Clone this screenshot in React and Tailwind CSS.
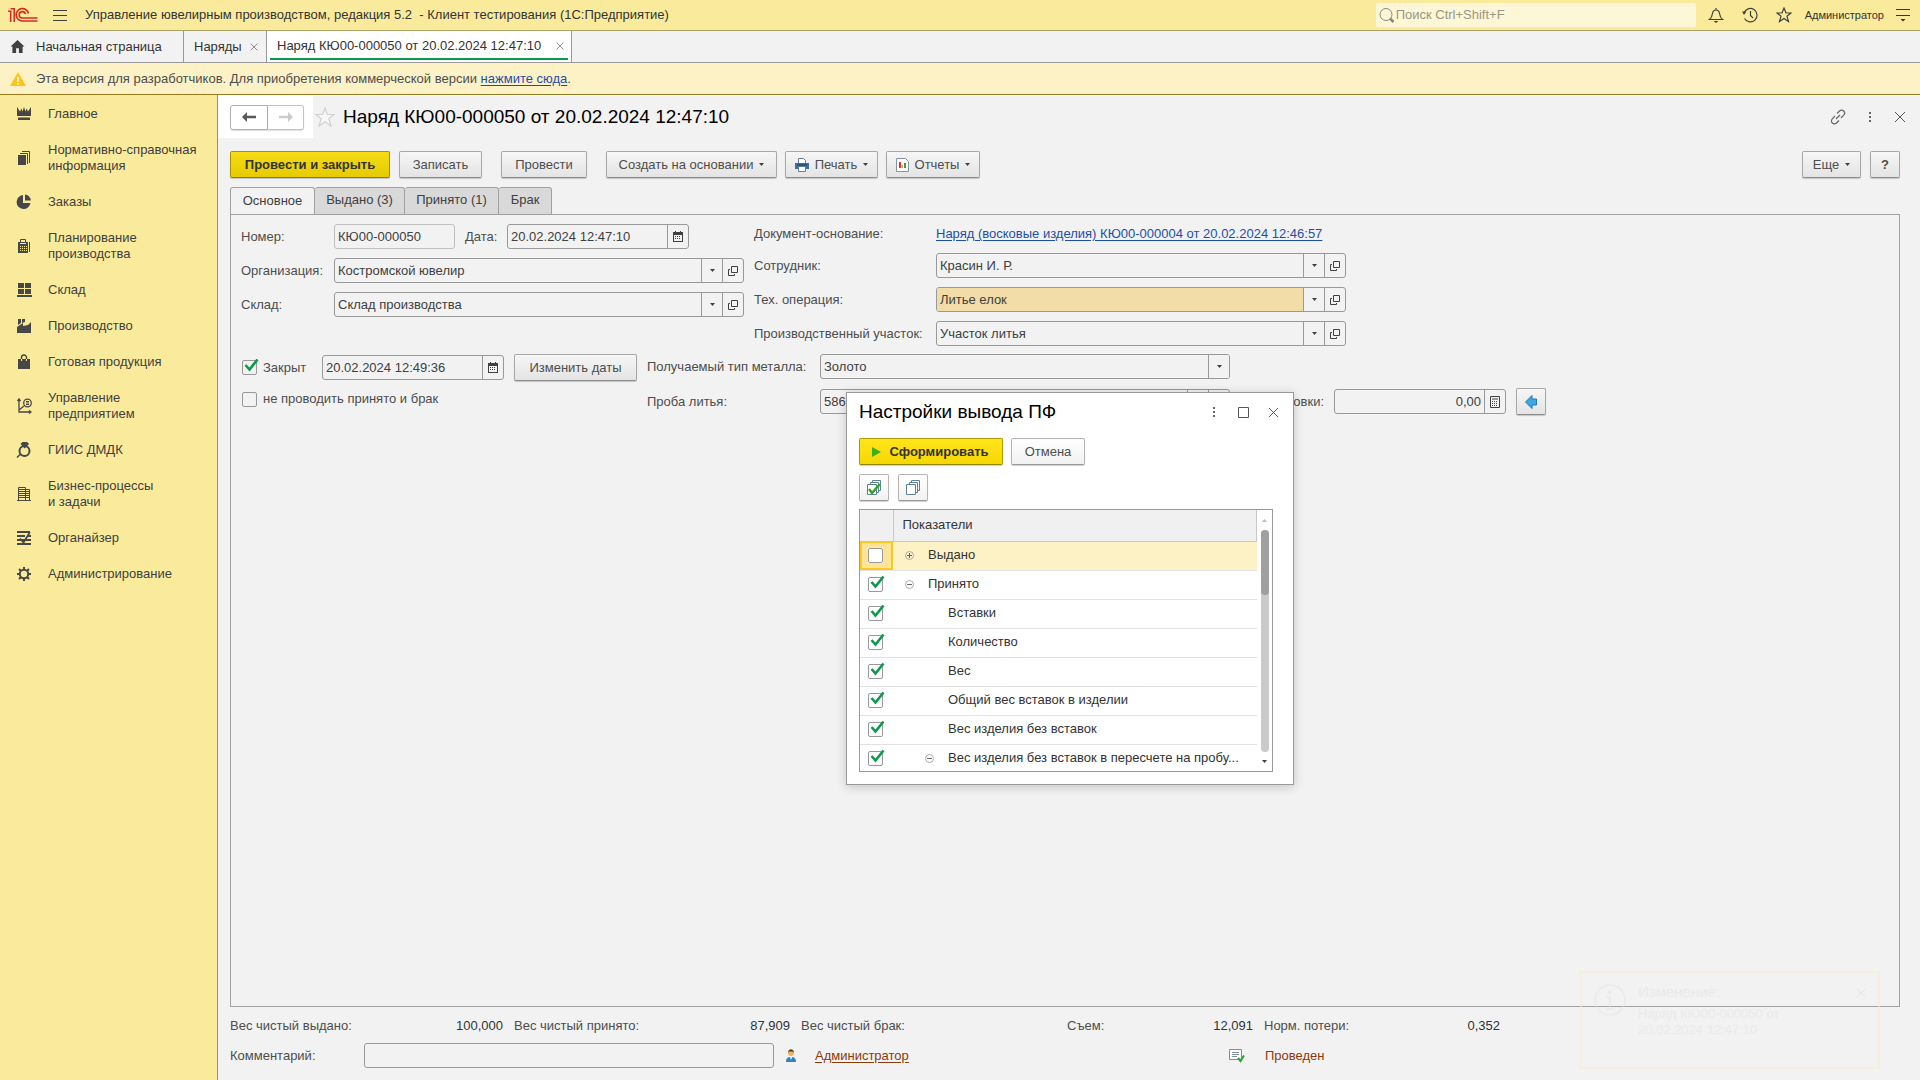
const navItems = [
    { icon: "crown", label: "Главное" },
    { icon: "docs", label: "Нормативно-справочная информация" },
    { icon: "pie", label: "Заказы" },
    { icon: "calc", label: "Планирование производства" },
    { icon: "boxes", label: "Склад" },
    { icon: "factory", label: "Производство" },
    { icon: "bag", label: "Готовая продукция" },
    { icon: "graph", label: "Управление предприятием" },
    { icon: "ring", label: "ГИИС ДМДК" },
    { icon: "building", label: "Бизнес-процессы и\u00a0задачи" },
    { icon: "organizer", label: "Органайзер" },
    { icon: "gear", label: "Администрирование" },
];

const formTabs = [
    { title: "Основное", width: "w-[85px]" },
    { title: "Выдано (3)", width: "w-[90px]" },
    { title: "Принято (1)", width: "w-[94px]" },
    { title: "Брак", width: "w-[53px]" },
];

const indicators = [
    { label: "Выдано", checked: false, toggle: "plus", level: 0 },
    { label: "Принято", checked: true, toggle: "minus", level: 0 },
    { label: "Вставки", checked: true, level: 1 },
    { label: "Количество", checked: true, level: 1 },
    { label: "Вес", checked: true, level: 1 },
    { label: "Общий вес вставок в изделии", checked: true, level: 1 },
    { label: "Вес изделия без вставок", checked: true, level: 1 },
    { label: "Вес изделия без вставок в пересчете на пробу...", checked: true, toggle: "minus", level: 1 },
];

const navShapes = {
    crown: <path d="M1 1l3 4.500L5.500 2.500 6.500 5.500 8 1l1.500 4.500 1-3L12 5.500 15 1v9H1zM2 11.500h12V14H2z" />,
    docs: (
        <>
            <path d="M2 5h8v10H2z" />
            <path d="M4 3.500h7.500V14M6 1.500h7.500V13" fill="none" stroke="currentColor" />
        </>
    ),
    pie: <path d="M7 1a7 7 0 1 0 7.500 8H7zM9 0.500V6.500h6A6.500 6.500 0 0 0 9 .5z" />,
    calc: (
        <>
            <path d="M4.500 4V1.500h5V4" fill="none" stroke="currentColor" />
            <path fillRule="evenodd" d="M2 4h10v11H2zM4 8v1h1V8zm2 0v1h1V8zm2 0v1h1V8zm2 0v1h1V8zM4 10v1h1v-1zm2 0v1h1v-1zm2 0v1h1v-1zm2 0v1h1v-1zM4 12v1h1v-1zm2 0v1h1v-1zm2 0v1h1v-1zm2 0v1h1v-1zM4 5v1h6V5z" />
            <path d="M13 4h1v10h-1z" />
        </>
    ),
    boxes: <path d="M2 1h6v5H2zM9 1h6v5H9zM2 7h6v5H2zM9 7h6v5H9zM1 13h15v2H1z" />,
    factory: <path d="M2 1h3v4l-3 2zM6 1h3v3L6 5zM1 15V9l6-4v3l5-1 3-3v11z" />,
    bag: (
        <>
            <path d="M2 5h12v10H2z" />
            <path d="M5.500 5V3.500a2.500 2.500 0 0 1 5 0V5" fill="none" stroke="currentColor" strokeWidth="1.400" />
            <path d="M5.500 5v2M10.500 5v2" stroke="#faeb9c" />
        </>
    ),
    graph: (
        <>
            <path d="M3 1v13h12M3 12l5-4M1.500 3L3 1l1.500 2M13 12.500l2 1.500-2 1.500" fill="none" stroke="currentColor" strokeWidth="1.300" />
            <circle cx="11.500" cy="5" r="3.800" fill="none" stroke="currentColor" strokeWidth="1.300" />
            <path d="M10 3h3v1.500h-3zM10 5.500h3V7h-3z" />
        </>
    ),
    ring: (
        <>
            <circle cx="8.500" cy="9" r="5" fill="none" stroke="currentColor" strokeWidth="2" />
            <path d="M5.500 2L7 .5h3.500L12 2 8.700 5.500zM1 15.500l4-4" stroke="currentColor" strokeWidth="1.500" />
        </>
    ),
    building: (
        <>
            <path d="M2.500 15V1.500h7V15M9.500 3.500h4V15M1 14.500h14" fill="none" stroke="currentColor" />
            <path d="M3 3.500h6M3 5.500h6M3 7.500h6M3 9.500h6M3 11.500h6M10 5.500h3M10 7.500h3M10 9.500h3M10 11.500h3" stroke="currentColor" />
        </>
    ),
    organizer: (
        <path d="M1 2h13M1 6h8M11 6h4M1 10h14M1 14h14M4 8.500l3.500 4L14 2" fill="none" stroke="currentColor" strokeWidth="1.800" />
    ),
    gear: (
        <>
            <circle cx="8" cy="8" r="4.200" fill="none" stroke="currentColor" strokeWidth="2" />
            <path d="M8 1v2.500M8 12.500V15M1 8h2.500M12.500 8H15M3 3l1.800 1.800M11.200 11.200L13 13M13 3l-1.800 1.800M3 13l1.800-1.800" stroke="currentColor" strokeWidth="2" />
        </>
    ),
};

const buttonColors = {
    gray: "border-[#a8a8a8] border-b-[#8c8c8c] bg-linear-to-b from-[#f6f6f6] to-[#e4e4e4] text-[#4d4d4d]",
    white: "border-[#b4b4b4] border-b-[#999] bg-linear-to-b from-white to-[#f2f2f2] text-[#4d4d4d]",
    gold: "font-bold border-[#a89200] border-b-[#8f7c00] bg-linear-to-b from-[#f5dc14] to-[#e6cb00] text-[#333]",
    yellow: "font-bold border-[#b09a00] border-b-[#948200] bg-linear-to-b from-[#ffe41a] to-[#f5d800] text-[#333]",
};

function NavIcon({ name }) {
    return (
        <svg viewBox="0 0 16 16" fill="currentColor" className="w-4 h-4 shrink-0 text-[#474747]">
            {navShapes[name]}
        </svg>
    );
}

function Logo() {
    return (
        <svg viewBox="0 0 30 16" className="w-[30px] h-4 shrink-0" fill="none" stroke="#dc2a1e" strokeWidth="1.600">
            <path d="M0 4.300h2.700V15M2.500 1.800h3.700V15" />
            <path d="M20.500 6.500A6.200 6.200 0 1 0 14.300 14H29.500" />
            <path d="M17.500 7A3.200 3.200 0 1 0 14.300 11H29.500" />
        </svg>
    );
}

function Caret({ className = "text-[#404040]" }) {
    return (
        <svg viewBox="0 0 5 3" fill="currentColor" className={`w-[5px] h-[3px] ${className}`}>
            <path d="M0 0h5L2.500 3z" />
        </svg>
    );
}

function CloseIcon({ className = "w-3 h-3" }) {
    return (
        <svg viewBox="0 0 12 12" className={className} fill="none" stroke="#555">
            <path d="M1 1l10 10M11 1L1 11" />
        </svg>
    );
}

function DotsIcon() {
    return (
        <svg viewBox="0 0 4 12" className="w-1 h-3" fill="#666">
            <path d="M1 1h2v2H1zM1 5h2v2H1zM1 9h2v2H1z" />
        </svg>
    );
}

function OpenIcon() {
    return (
        <svg viewBox="0 0 10 10" className="w-[10px] h-[10px]" fill="none" stroke="#404040">
            <path d="M3.500 .5h6v6h-6zM2 3.500H.5v6h6V8" />
        </svg>
    );
}

function CalendarIcon() {
    return (
        <svg viewBox="0 0 10 11" className="w-[10px] h-[11px]">
            <path d="M0 1h10v10H0z" fill="#404040" />
            <path d="M2 0h1v2H2zM7 0h1v2H7z" fill="#404040" />
            <path d="M1 4h8v6H1z" fill="#f2f2f2" />
            <path d="M2 5.500h6M2 7.500h6" stroke="#404040" strokeDasharray="1 1" />
        </svg>
    );
}

function CalculatorIcon() {
    return (
        <svg viewBox="0 0 10 12" className="w-[10px] h-3" fill="none" stroke="#404040">
            <path d="M.5 .5h9v11h-9zM2 3h6" />
            <path d="M2 5.500h6M2 7.500h6M2 9.500h6" strokeDasharray="1 1" />
        </svg>
    );
}

function SheetStack() {
    return (
        <>
            <path d="M6.500 .5h8v10h-8z" />
            <path d="M4.500 2.500h8v10h-8z" />
            <path d="M1.500 4.500h9v10h-9z" />
        </>
    );
}

function Button({ children, className = "", label, color = "gray" }) {
    return (
        <button
            type="button"
            aria-label={label}
            className={`flex items-center justify-center h-[27px] rounded-[2px] border shadow-[0_1px_1px_#00000030] whitespace-nowrap ${buttonColors[color]} ${className}`}
        >
            {children}
        </button>
    );
}

function Checkbox({ id, label, defaultChecked = false }) {
    return (
        <span className="relative block w-[15px] h-[15px] shrink-0">
            <input
                id={id}
                type="checkbox"
                aria-label={label}
                defaultChecked={defaultChecked}
                className="peer block appearance-none w-[15px] h-[15px] border border-[#999] rounded-[2px] bg-transparent"
            />
            <svg
                viewBox="0 0 18 14"
                className="hidden peer-checked:block absolute left-0 -top-[2px] w-[18px] h-[14px] pointer-events-none"
                fill="none"
                stroke="#0a9a4b"
                strokeWidth="2.600"
            >
                <path d="M3.500 7l4 4.500L15.500 1.500" />
            </svg>
        </span>
    );
}

function ComboField({ id, value, className, openable = true, highlight = false }) {
    return (
        <div className={`flex h-[25px] border border-[#999] rounded-[3px] overflow-hidden ${className}`}>
            <div className="relative flex-1">
                <select
                    id={id}
                    className={`appearance-none w-full h-full pl-[3px] pr-6 text-[#404040] ${highlight ? "bg-[#f2dca8]" : "bg-transparent"}`}
                >
                    <option>{value}</option>
                </select>
                <span className="absolute right-0 top-0 h-full w-[21px] border-l border-[#999] bg-[#f2f2f2] flex items-center justify-center pointer-events-none">
                    <Caret />
                </span>
            </div>
            {openable && (
                <button type="button" aria-label="Открыть" className="w-[21px] border-l border-[#999] flex items-center justify-center">
                    <OpenIcon />
                </button>
            )}
        </div>
    );
}

function InputField({ id, value, className, icon, buttonLabel, inputClass = "" }) {
    return (
        <div className={`flex h-[25px] border border-[#999] rounded-[3px] ${className}`}>
            <input id={id} type="text" defaultValue={value} className={`flex-1 min-w-0 px-[3px] text-[#404040] ${inputClass}`} />
            <button type="button" aria-label={buttonLabel} className="w-[21px] border-l border-[#999] flex items-center justify-center">
                {icon}
            </button>
        </div>
    );
}

function TopBar() {
    return (
        <header className="flex items-center h-[31px] bg-[#faeb9c] border-b border-[#aba266] text-[#333]">
            <a href="#" aria-label="1С:Предприятие" className="ml-2">
                <Logo />
            </a>
            <button type="button" aria-label="Меню" className="ml-[15px]">
                <svg viewBox="0 0 14 12" className="w-[14px] h-3" stroke="#404040" fill="none">
                    <path d="M0 1.500h14M0 6.500h14M0 11.500h14" />
                </svg>
            </button>
            <span className="ml-[18px] whitespace-pre">Управление ювелирным производством, редакция 5.2  - Клиент тестирования (1С:Предприятие)</span>
            <label className="ml-auto flex items-center gap-px w-80 h-6 pl-[3px] rounded-[2px] bg-[#fdf7d8]">
                <svg viewBox="0 0 16 16" className="w-4 h-4" fill="none" stroke="#8c8872">
                    <circle cx="7" cy="7.500" r="6" />
                    <path d="M11 11.500l3.500 3.500" strokeWidth="2.500" />
                </svg>
                <input
                    type="search"
                    aria-label="Поиск"
                    placeholder="Поиск Ctrl+Shift+F"
                    className="flex-1 min-w-0 text-[13px] placeholder:text-[#9a9682]"
                />
            </label>
            <div className="flex items-center ml-3 gap-[18px]">
                <button type="button" aria-label="Уведомления">
                    <svg viewBox="0 0 16 16" className="w-4 h-4" fill="none" stroke="#404040" strokeWidth="1.200">
                        <path d="M1.500 12.500c2-1.500 2.500-3 3-6 .3-2.500 1.500-3.500 3.500-3.500s3.200 1 3.500 3.500c.5 3 1 4.500 3 6zM8 1v2" />
                        <path d="M5.500 14h5L8 16z" fill="#404040" stroke="none" />
                    </svg>
                </button>
                <button type="button" aria-label="История">
                    <svg viewBox="0 0 16 16" className="w-4 h-4" fill="none" stroke="#404040" strokeWidth="1.200">
                        <path d="M2 6a6.700 6.700 0 1 1 .5 5.500M8.500 4v4.500l2.500 2.500" />
                        <path d="M0 4.500h4.500L2 8z" fill="#404040" stroke="none" />
                    </svg>
                </button>
                <button type="button" aria-label="Избранное">
                    <svg viewBox="0 0 16 16" className="w-4 h-4" fill="none" stroke="#404040" strokeWidth="1.200">
                        <path d="M8 1l2 5h5l-4 3.300 1.500 5.200L8 11.500l-4.500 3L5 9.300 1 6h5z" />
                    </svg>
                </button>
            </div>
            <a href="#" className="ml-[13px] text-[11px]">Администратор</a>
            <button type="button" aria-label="Настройки" className="ml-3 mr-[10px]">
                <svg viewBox="0 0 14 14" className="w-[14px] h-[14px]" fill="none" stroke="#333">
                    <path d="M0 1.500h14M0 7.500h14" />
                    <path d="M4.500 11h5L7 13.500z" fill="#333" stroke="none" />
                </svg>
            </button>
        </header>
    );
}

function WindowTabs() {
    return (
        <nav className="flex h-8 bg-[#f2f2f2] border-b border-[#999] text-[#333]">
            <a href="#" className="flex items-center gap-[11px] pl-[10px] w-[184px] border-r border-[#999]">
                <svg viewBox="0 0 15 14" className="w-[15px] h-[13px]" fill="#404040">
                    <path d="M7.500 0L15 7h-2v7H9V9H6v5H2V7H0z" />
                </svg>
                Начальная страница
            </a>
            <div className="flex items-center justify-between pl-[10px] pr-2 w-[83px] border-r border-[#999]">
                <a href="#">Наряды</a>
                <button type="button" aria-label="Закрыть Наряды">
                    <CloseIcon className="w-2 h-2" />
                </button>
            </div>
            <div className="w-[305px] px-[3px] bg-white border-r border-[#999]">
                <div className="flex items-center justify-between h-[29px] pt-[2px] pl-[7px] pr-1 border-b-2 border-[#0b994c]">
                    <a href="#">Наряд КЮ00-000050 от 20.02.2024 12:47:10</a>
                    <button type="button" aria-label="Закрыть Наряд">
                        <CloseIcon className="w-2 h-2" />
                    </button>
                </div>
            </div>
        </nav>
    );
}

function Banner() {
    return (
        <div className="flex items-center h-8 pl-[10px] bg-[#fdf2c6] border-b border-[#947a1c] text-[#4d4d4d]">
            <svg viewBox="0 0 16 14" className="w-4 h-[14px] mr-[10px]">
                <path d="M8 0l8 14H0z" fill="#fcc419" />
                <path d="M7.200 5h1.600v5H7.200zM7.200 11h1.600v1.500H7.200z" fill="#fff" />
            </svg>
            <p>
                Эта версия для разработчиков. Для приобретения коммерческой версии{" "}
                <a href="#" className="text-[#1d4fa8] underline underline-offset-2">нажмите сюда</a>.
            </p>
        </div>
    );
}

function Sidebar() {
    return (
        <aside className="w-[218px] shrink-0 pt-px bg-[#faeb9c] border-r border-[#999066]">
            <ul>
                {navItems.map(item => (
                    <li key={item.label}>
                        <a href="#" className="flex items-center gap-4 py-[10px] pl-4 pr-2 leading-4 text-[#404040]">
                            <NavIcon name={item.icon} />
                            <span className="w-[160px]">{item.label}</span>
                        </a>
                    </li>
                ))}
            </ul>
        </aside>
    );
}

function DocumentHeader() {
    return (
        <div className="flex items-center h-[42px] pr-[14px]">
            <div className="flex items-center h-full pl-3 pr-[9px] bg-white">
                <button
                    type="button"
                    aria-label="Назад"
                    className="flex items-center justify-center w-[38px] h-[25px] rounded-l-[3px] border border-[#b0b0b0] shadow-[0_1px_1px_#00000025]"
                >
                    <svg viewBox="0 0 14 10" className="w-[14px] h-[10px]" fill="#595959">
                        <path d="M0 5l5-5v3.800h9v2.400H5V10z" />
                    </svg>
                </button>
                <button
                    type="button"
                    aria-label="Вперед"
                    disabled
                    className="flex items-center justify-center w-[36px] h-[25px] rounded-r-[3px] border border-l-0 border-[#c4c4c4] shadow-[0_1px_1px_#00000020]"
                >
                    <svg viewBox="0 0 14 10" className="w-[14px] h-[10px]" fill="#ccc">
                        <path d="M14 5L9 0v3.800H0v2.400h9V10z" />
                    </svg>
                </button>
            </div>
            <button type="button" aria-label="В избранное" className="ml-[2px]">
                <svg viewBox="0 0 20 20" className="w-5 h-5" fill="#f8f8f8" stroke="#d0d0d0" strokeWidth="1.200">
                    <path d="M10 1l2.400 6.500H19l-5.200 4.200L16 19l-6-4.300L4 19l2.200-7.300L1 7.500h6.600z" />
                </svg>
            </button>
            <h1 className="ml-2 text-[19px] text-black">Наряд КЮ00-000050 от 20.02.2024 12:47:10</h1>
            <div className="flex items-center gap-[22px] ml-auto">
                <button type="button" aria-label="Получить ссылку">
                    <svg viewBox="0 0 16 16" className="w-4 h-4" fill="none" stroke="#666" strokeWidth="1.200">
                        <path d="M6 10l4-4M7 4.500l2.500-2.500a2.800 2.800 0 0 1 4.200 4.200L11 9M9 11.500L6.500 14a2.800 2.800 0 0 1-4.200-4.200L5 7" />
                    </svg>
                </button>
                <button type="button" aria-label="Еще действия">
                    <DotsIcon />
                </button>
                <button type="button" aria-label="Закрыть">
                    <CloseIcon />
                </button>
            </div>
        </div>
    );
}

function Toolbar() {
    return (
        <div className="flex items-center mt-[13px]">
            <Button className="w-[160px]" color="gold">Провести и закрыть</Button>
            <Button className="ml-[9px] w-[83px]">Записать</Button>
            <Button className="ml-[19px] w-[86px]">Провести</Button>
            <Button className="ml-[19px] w-[171px] gap-[6px]">
                Создать на основании <Caret />
            </Button>
            <Button className="ml-2 w-[93px] gap-[6px]">
                <svg viewBox="0 0 14 14" className="w-[14px] h-[14px]">
                    <path d="M3.500 5V.5h5l2 2V5" fill="#fff" stroke="#5c7f9e" />
                    <path d="M0 5h14v6H0z" fill="#3f6f9a" />
                    <path d="M2 7h10" stroke="#1e3f5e" />
                    <path d="M3.500 8.500h7v5h-7z" fill="#fff" stroke="#5c7f9e" />
                </svg>
                Печать <Caret />
            </Button>
            <Button className="ml-2 w-[94px] gap-[6px]">
                <svg viewBox="0 0 13 14" className="w-[13px] h-[14px]">
                    <path d="M.5 .5h9l3 3v10H.5z" fill="#fff" stroke="#8494a4" />
                    <path d="M3 4h2v6H3z" fill="#e2332b" />
                    <path d="M5.500 7h1.500v3H5.500z" fill="#f08c2e" />
                    <path d="M8 5h2v5H8z" fill="#3aa03a" />
                </svg>
                Отчеты <Caret />
            </Button>
            <Button className="ml-auto w-[59px] gap-[6px]">
                Еще <Caret />
            </Button>
            <Button className="ml-[9px] w-[30px] font-bold" label="Справка">?</Button>
        </div>
    );
}

function FormTabs() {
    return (
        <div role="tablist" className="flex -mb-px">
            {formTabs.map((tab, i) => (
                <button
                    key={tab.title}
                    type="button"
                    role="tab"
                    aria-selected={i === 0}
                    className={`h-7 pb-[2px] border border-[#a0a0a0] rounded-t-[3px] text-[#404040] ${tab.width} ${i === 0 ? "border-b-0 bg-[#f2f2f2]" : "border-l-0 bg-[#d9d9d9]"}`}
                >
                    {tab.title}
                </button>
            ))}
        </div>
    );
}

function MainForm() {
    return (
        <div className="pl-[10px] pt-[9px]">
            <div className="flex">
                <div className="grid grid-cols-[93px_410px] gap-y-[9px] items-center content-start">
                    <label htmlFor="number">Номер:</label>
                    <div className="flex items-center">
                        <input
                            id="number"
                            type="text"
                            readOnly
                            defaultValue="КЮ00-000050"
                            className="w-[121px] h-[25px] px-[3px] border border-[#c0c0c0] rounded-[3px] text-[#404040]"
                        />
                        <label htmlFor="date" className="w-[52px] pl-[10px]">Дата:</label>
                        <InputField id="date" value="20.02.2024 12:47:10" className="w-[182px]" icon={<CalendarIcon />} buttonLabel="Выбрать дату" />
                    </div>
                    <label htmlFor="company">Организация:</label>
                    <ComboField id="company" value="Костромской ювелир" className="w-full" />
                    <label htmlFor="store">Склад:</label>
                    <ComboField id="store" value="Склад производства" className="w-full" />
                </div>
                <div className="grid grid-cols-[182px_410px] gap-y-[9px] items-center ml-[10px]">
                    <span className="h-5 leading-5">Документ-основание:</span>
                    <a href="#" className="h-5 leading-5 text-[#1d4fa8] underline underline-offset-2 whitespace-nowrap">
                        Наряд (восковые изделия) КЮ00-000004 от 20.02.2024 12:46:57
                    </a>
                    <label htmlFor="employee">Сотрудник:</label>
                    <ComboField id="employee" value="Красин И. Р." className="w-full" />
                    <label htmlFor="operation">Тех. операция:</label>
                    <ComboField id="operation" value="Литье елок" className="w-full" highlight />
                    <label htmlFor="area" className="whitespace-nowrap">Производственный участок:</label>
                    <ComboField id="area" value="Участок литья" className="w-full" />
                </div>
            </div>
            <div className="flex mt-2">
                <div className="w-[406px] pl-px">
                    <div className="flex items-center">
                        <Checkbox id="closed" defaultChecked />
                        <label htmlFor="closed" className="w-[65px] pl-[6px]">Закрыт</label>
                        <InputField id="closedDate" value="20.02.2024 12:49:36" className="w-[182px]" icon={<CalendarIcon />} buttonLabel="Выбрать дату" />
                        <Button className="ml-[10px] w-[123px]">Изменить даты</Button>
                    </div>
                    <div className="flex items-center mt-[10px]">
                        <Checkbox id="skip" />
                        <label htmlFor="skip" className="pl-[6px]">не проводить принято и брак</label>
                    </div>
                </div>
                <div className="flex flex-col gap-[9px]">
                    <div className="flex items-center">
                        <label htmlFor="metal" className="w-[173px] whitespace-nowrap">Получаемый тип металла:</label>
                        <ComboField id="metal" value="Золото" className="w-[410px]" openable={false} />
                    </div>
                    <div className="flex items-center">
                        <label htmlFor="probe" className="w-[173px]">Проба литья:</label>
                        <ComboField id="probe" value="586" className="w-[410px]" />
                        <label htmlFor="alloy" className="w-[104px] pr-[10px] text-right whitespace-nowrap">Вес заготовки:</label>
                        <InputField
                            id="alloy"
                            value="0,00"
                            className="w-[172px]"
                            inputClass="text-right"
                            icon={<CalculatorIcon />}
                            buttonLabel="Калькулятор"
                        />
                        <Button className="ml-[10px] w-[30px]" label="Заполнить">
                            <svg viewBox="0 0 12 14" className="w-3 h-[14px]">
                                <path d="M.5 7L7 .5V4h4.500v6H7v3.500z" fill="#3ea6e0" stroke="#1f78b4" />
                            </svg>
                        </Button>
                    </div>
                </div>
            </div>
        </div>
    );
}

function Footer() {
    return (
        <footer className="pt-[11px] pb-3">
            <dl className="flex leading-4 h-4 whitespace-nowrap">
                <dt className="w-[134px]">Вес чистый выдано:</dt>
                <dd className="w-[139px] text-right text-[#333]">100,000</dd>
                <dt className="ml-[11px] w-[134px]">Вес чистый принято:</dt>
                <dd className="w-[142px] text-right text-[#333]">87,909</dd>
                <dt className="ml-[11px] w-[266px]">Вес чистый брак:</dt>
                <dt className="w-[60px]">Съем:</dt>
                <dd className="w-[126px] text-right text-[#333]">12,091</dd>
                <dt className="ml-[11px] w-[100px]">Норм. потери:</dt>
                <dd className="w-[136px] text-right text-[#333]">0,352</dd>
            </dl>
            <div className="flex items-center mt-[9px]">
                <label htmlFor="comment" className="w-[134px]">Комментарий:</label>
                <input id="comment" type="text" className="w-[410px] h-[25px] px-[3px] border border-[#999] rounded-[3px]" />
                <svg viewBox="0 0 10 13" className="w-[10px] h-[13px] ml-3">
                    <path d="M0 13c0-4 2-5 5-5s5 1 5 5z" fill="#2d86c0" />
                    <circle cx="5" cy="4" r="3" fill="#f0b36a" />
                    <path d="M2 4c0-5 6-5 6 0L7 2.500H3z" fill="#5a3a18" />
                    <path d="M4 8h2l-1 3z" fill="#fff" />
                </svg>
                <a href="#" className="ml-[19px] w-[414px] text-[#8c3a0a] underline underline-offset-2">Администратор</a>
                <svg viewBox="0 0 16 14" className="w-4 h-[14px] mr-5">
                    <path d="M.5 .5h12v10H.5z" fill="#fff" stroke="#7d8ea3" />
                    <path d="M3 3.500h7M3 5.500h7M3 7.500h5" stroke="#7d8ea3" />
                    <path d="M9 9l2.500 3L15 6.500" fill="none" stroke="#2ca32c" strokeWidth="2" />
                </svg>
                <span className="text-[#8c3a0a]">Проведен</span>
            </div>
        </footer>
    );
}

function TreeToggle({ type }) {
    return (
        <button type="button" aria-label={type === "plus" ? "Развернуть" : "Свернуть"} className="block w-[9px] h-[9px]">
            <svg viewBox="0 0 9 9" className="w-[9px] h-[9px]" fill="none" stroke="#aaa">
                <circle cx="4.500" cy="4.500" r="4" />
                <path d={type === "plus" ? "M2 4.500h5M4.500 2v5" : "M2 4.500h5"} stroke="#666" />
            </svg>
        </button>
    );
}

function IndicatorsTable() {
    return (
        <div className="flex mt-2 mr-5 h-[263px] border border-[#999] overflow-hidden">
            <table className="flex-1 table-fixed border-collapse w-[398px] text-[#333]">
                <thead>
                    <tr className="h-[31px] bg-[#f0f0f0] border-b border-[#c8c8c8]">
                        <th className="w-[33px] border-r border-[#c8c8c8]" aria-label="Отметка"></th>
                        <th className="p-0 pl-[9px] pb-px text-left font-normal border-r border-[#c8c8c8]">Показатели</th>
                    </tr>
                </thead>
                <tbody>
                    {indicators.map((row, i) => (
                        <tr key={row.label} className={`h-[29px] border-b border-[#e2e2e2] ${i === 0 ? "bg-[#fdf2c6]" : ""}`}>
                            <td className={i === 0 ? "p-0 bg-[#fde496] outline-2 -outline-offset-2 outline-[#fac81e]" : "p-0"}>
                                <span className={i === 0 ? "block ml-2 w-[15px] bg-white" : "block ml-2 w-[15px]"}>
                                    <Checkbox label={row.label} defaultChecked={row.checked} />
                                </span>
                            </td>
                            <td className="p-0 pb-px">
                                <div className={row.level === 0 ? "flex items-center pl-3" : "flex items-center pl-8"}>
                                    <span className="w-[9px] shrink-0">{row.toggle && <TreeToggle type={row.toggle} />}</span>
                                    <span className="ml-[14px] whitespace-nowrap">{row.label}</span>
                                </div>
                            </td>
                        </tr>
                    ))}
                </tbody>
            </table>
            <div className="flex flex-col items-center w-[15px] pt-[9px] pb-[8px] bg-white">
                <Caret className="rotate-180 text-[#bbb]" />
                <div className="flex-1 w-2 my-2 rounded-full bg-[#cacaca]">
                    <div className="w-2 h-[65px] rounded-full bg-[#a0a0a0]"></div>
                </div>
                <Caret />
            </div>
        </div>
    );
}

function SettingsDialog() {
    return (
        <section
            role="dialog"
            aria-labelledby="dialogTitle"
            className="absolute left-[846px] top-[392px] w-[448px] h-[393px] pl-3 bg-white border border-[#999] shadow-[0_2px_10px_#00000030]"
        >
            <div className="flex items-center h-[38px] pr-[14px]">
                <h2 id="dialogTitle" className="text-[19px] text-black">Настройки вывода ПФ</h2>
                <button type="button" aria-label="Еще действия" className="ml-auto">
                    <DotsIcon />
                </button>
                <button type="button" aria-label="Развернуть окно" className="ml-[22px]">
                    <svg viewBox="0 0 11 11" className="w-[11px] h-[11px]" fill="none" stroke="#555">
                        <path d="M.5 .5h10v10H.5z" />
                    </svg>
                </button>
                <button type="button" aria-label="Закрыть окно" className="ml-[19px]">
                    <CloseIcon className="w-[11px] h-[11px]" />
                </button>
            </div>
            <div className="flex gap-2 mt-[7px]">
                <Button className="w-[144px] gap-2 pr-px" color="yellow">
                    <svg viewBox="0 0 9 10" className="w-[9px] h-[10px]" fill="#3cb01e">
                        <path d="M0 0l9 5-9 5z" />
                    </svg>
                    Сформировать
                </Button>
                <Button className="w-[74px]" color="white">Отмена</Button>
            </div>
            <div className="flex gap-[9px] mt-[9px]">
                <Button className="w-[30px]" color="white" label="Отметить все">
                    <svg viewBox="0 0 16 16" className="w-4 h-4" fill="#fff" stroke="#5f7f98">
                        <SheetStack />
                        <path d="M3 9l3 4 8-9" fill="none" stroke="#2fa82a" strokeWidth="2.500" />
                    </svg>
                </Button>
                <Button className="w-[30px]" color="white" label="Снять отметки">
                    <svg viewBox="0 0 16 16" className="w-4 h-4" fill="#fff" stroke="#5f7f98">
                        <SheetStack />
                    </svg>
                </Button>
            </div>
            <IndicatorsTable />
        </section>
    );
}

function Toast() {
    return (
        <div role="status" className="absolute right-10 bottom-[11px] flex w-[300px] h-[98px] pt-[11px] px-3 border-2 border-[#f8eecb] opacity-50 text-[#e2e4e8]">
            <svg viewBox="0 0 32 32" className="w-8 h-8 shrink-0" fill="none" stroke="#e2e4e8" strokeWidth="1.500">
                <circle cx="16" cy="16" r="15" />
                <path d="M12 13h4v12M11 25h10M15 7h2v2h-2z" />
            </svg>
            <div className="ml-3 leading-4">
                <p className="text-[15px] mb-[6px]">Изменение:</p>
                <p className="w-[160px]">Наряд КЮ00-000050 от 20.02.2024 12:47:10</p>
            </div>
            <span className="ml-auto pt-1">
                <CloseIcon className="w-[10px] h-[10px] opacity-20" />
            </span>
        </div>
    );
}

export default function App() {
    return (
        <div className="relative flex flex-col min-h-screen bg-[#f2f2f2] font-['Liberation_Sans',Arial,sans-serif] text-[13px] leading-4 text-[#4d4d4d]">
            <TopBar />
            <WindowTabs />
            <Banner />
            <div className="flex flex-1">
                <Sidebar />
                <main className="flex flex-col flex-1 min-w-0 border-t border-white">
                    <DocumentHeader />
                    <div className="flex flex-col flex-1 pl-3 pr-5">
                        <Toolbar />
                        <div className="flex flex-col flex-1 mt-[9px]">
                            <FormTabs />
                            <div className="flex-1 border border-[#a0a0a0]">
                                <MainForm />
                            </div>
                        </div>
                        <Footer />
                    </div>
                </main>
            </div>
            <SettingsDialog />
            <Toast />
        </div>
    );
}
